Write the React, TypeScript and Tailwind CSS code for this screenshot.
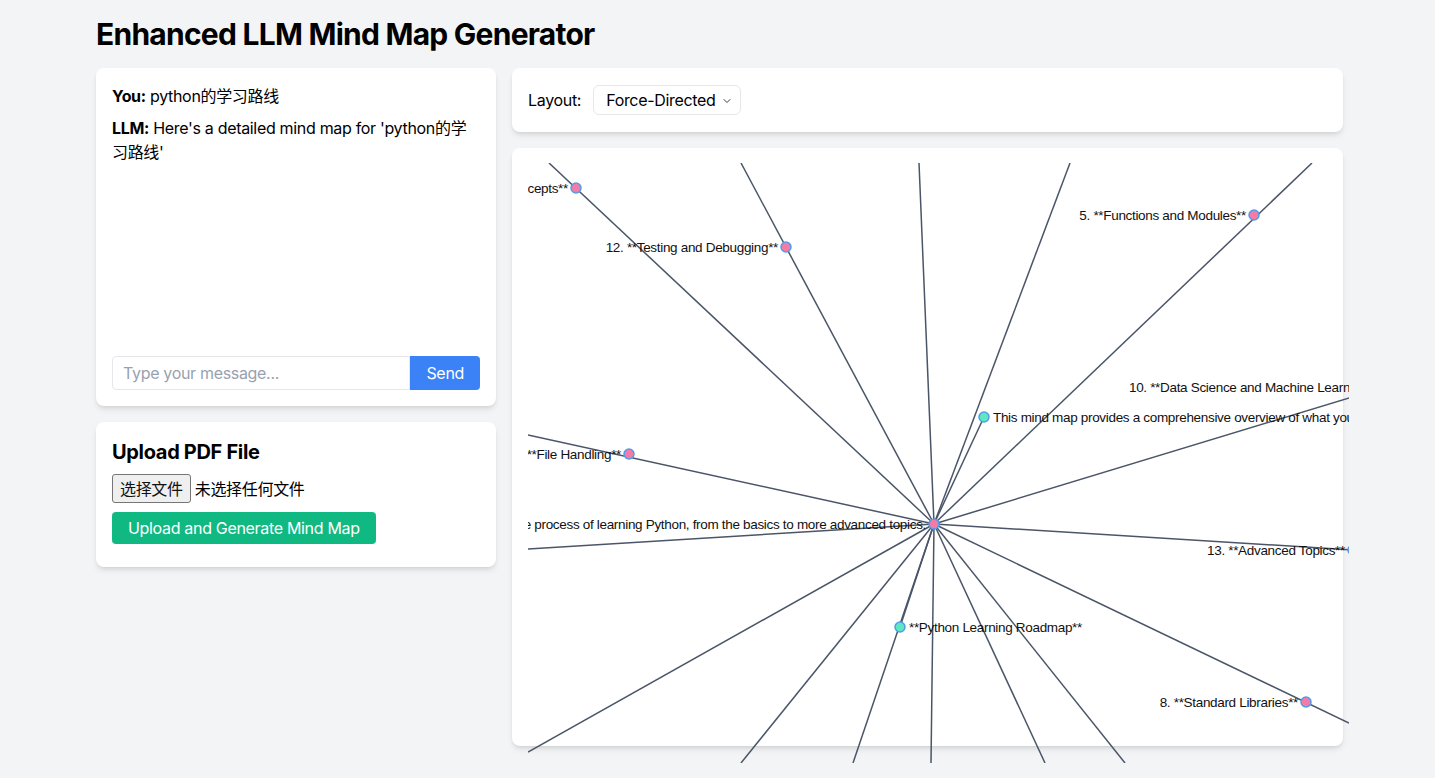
import { ChevronDown } from 'lucide-react';

type Pt = { x: number; y: number };

// center of the force layout, in svg coords
const C: Pt = { x: 406, y: 361 };

// edges that run from the center out past the svg box
const edges: Pt[] = [
    { x: 21, y: 0 },
    { x: 213, y: 0 },
    { x: 391, y: 0 },
    { x: 542, y: 0 },
    { x: 784, y: 0 },
    { x: 456, y: 254 },
    { x: 857, y: 224 },
    { x: 825, y: 387 },
    { x: 821, y: 560 },
    { x: 597, y: 600 },
    { x: 517, y: 600 },
    { x: 403, y: 600 },
    { x: 325, y: 600 },
    { x: 372, y: 464 },
    { x: 213, y: 600 },
    { x: 0, y: 589 },
    { x: 0, y: 386 },
    { x: 0, y: 272 },
];

const nodes: { x: number; y: number; label: string; kind: 'topic' | 'note' }[] = [
    { x: 48, y: 25, label: '3. **Basic Concepts**', kind: 'topic' },
    { x: 258, y: 84, label: '12. **Testing and Debugging**', kind: 'topic' },
    { x: 726, y: 52, label: '5. **Functions and Modules**', kind: 'topic' },
    { x: 857, y: 224, label: '10. **Data Science and Machine Learning**', kind: 'topic' },
    { x: 456, y: 254, label: 'This mind map provides a comprehensive overview of what you need to learn', kind: 'note' },
    { x: 101, y: 291, label: '7. **File Handling**', kind: 'topic' },
    { x: 825, y: 387, label: '13. **Advanced Topics**', kind: 'topic' },
    { x: 372, y: 464, label: '**Python Learning Roadmap**', kind: 'note' },
    { x: 778, y: 539, label: '8. **Standard Libraries**', kind: 'topic' },
    {
        x: C.x,
        y: C.y,
        label: 'This mind map will guide you through the process of learning Python, from the basics to more advanced topics.',
        kind: 'topic',
    },
];

const MindMap = () => (
    <svg width={821} height={600} className="block overflow-hidden">
        {/* links */}
        <g stroke="#4a5568" strokeWidth={1.5}>
            {edges.map((e, i) => (
                <line key={i} x1={C.x} y1={C.y} x2={e.x} y2={e.y} />
            ))}
        </g>
        {/* nodes + labels */}
        {nodes.map((n) => (
            <g key={n.label}>
                <circle
                    cx={n.x}
                    cy={n.y}
                    r={5}
                    fill={n.kind === 'topic' ? '#f47ba7' : '#5de8c2'}
                    stroke="#4f9de8"
                    strokeWidth={1.5}
                />
                <text
                    x={n.kind === 'topic' ? n.x - 8 : n.x + 9}
                    y={n.y}
                    dy="0.35em"
                    textAnchor={n.kind === 'topic' ? 'end' : 'start'}
                    fontSize={13.5}
                    fill="#111"
                    style={{ fontFamily: '"Liberation Sans", Arial, sans-serif' }}
                >
                    {n.label}
                </text>
            </g>
        ))}
    </svg>
);

export default function App() {
    return (
        <div className="min-h-screen bg-[#f3f4f6] pl-[96px] pt-4 text-black tracking-[-0.02em] font-['Inter','Noto_Sans_CJK_SC',sans-serif]">
            <h1 className="text-3xl font-bold mb-4 tracking-[-0.025em]">Enhanced LLM Mind Map Generator</h1>

            <div className="flex gap-4 items-start">
                {/* Left column: chat + upload */}
                <div className="w-[400px] flex flex-col gap-4">
                    <div className="bg-white rounded-lg shadow-md p-4">
                        <div className="h-64 overflow-y-auto mb-4">
                            <p className="mb-2">
                                <span className="font-bold">You:</span> python的学习路线
                            </p>
                            <p className="mb-2">
                                <span className="font-bold">LLM:</span> Here's a detailed mind map for 'python的学习路线'
                            </p>
                        </div>
                        <div className="flex">
                            <input
                                type="text"
                                placeholder="Type your message..."
                                className="flex-grow min-w-0 border border-gray-200 rounded-l px-2.5 py-1 placeholder:text-gray-400 outline-none"
                            />
                            <button className="bg-[#3b82f6] text-white px-4 py-1 rounded-r">Send</button>
                        </div>
                    </div>

                    <div className="bg-white rounded-lg shadow-md px-4 pt-4 pb-[23px]">
                        <h2 className="text-xl font-bold mb-2">Upload PDF File</h2>
                        <div className="flex items-center h-[29px]">
                            <button className="h-[29px] px-[7px] border border-[#767676] rounded-[3px] bg-[#efefef] text-[#111]">
                                选择文件
                            </button>
                            <span className="ml-1">未选择任何文件</span>
                        </div>
                        <button className="mt-[9px] bg-[#10b981] text-white px-4 py-1 rounded">
                            Upload and Generate Mind Map
                        </button>
                    </div>
                </div>

                {/* Right column: layout picker + graph */}
                <div className="w-[831px] flex flex-col gap-4">
                    <div className="bg-white rounded-lg shadow-md px-4 h-[64px] flex items-center">
                        <label className="mr-3">Layout:</label>
                        <div className="relative w-[148px]">
                            <select className="appearance-none w-full h-[30px] border border-gray-200 rounded-md pl-3 pr-4 bg-white outline-none">
                                <option>Force-Directed</option>
                                <option>Radial</option>
                                <option>Tree</option>
                            </select>
                            <ChevronDown className="absolute right-2 top-[10px] w-3 h-3 text-gray-700 pointer-events-none" strokeWidth={2} />
                        </div>
                    </div>

                    <div className="bg-white rounded-lg shadow-md p-4 h-[598px]">
                        <div className="-mt-px">
                            <MindMap />
                        </div>
                    </div>
                </div>
            </div>
        </div>
    );
}
